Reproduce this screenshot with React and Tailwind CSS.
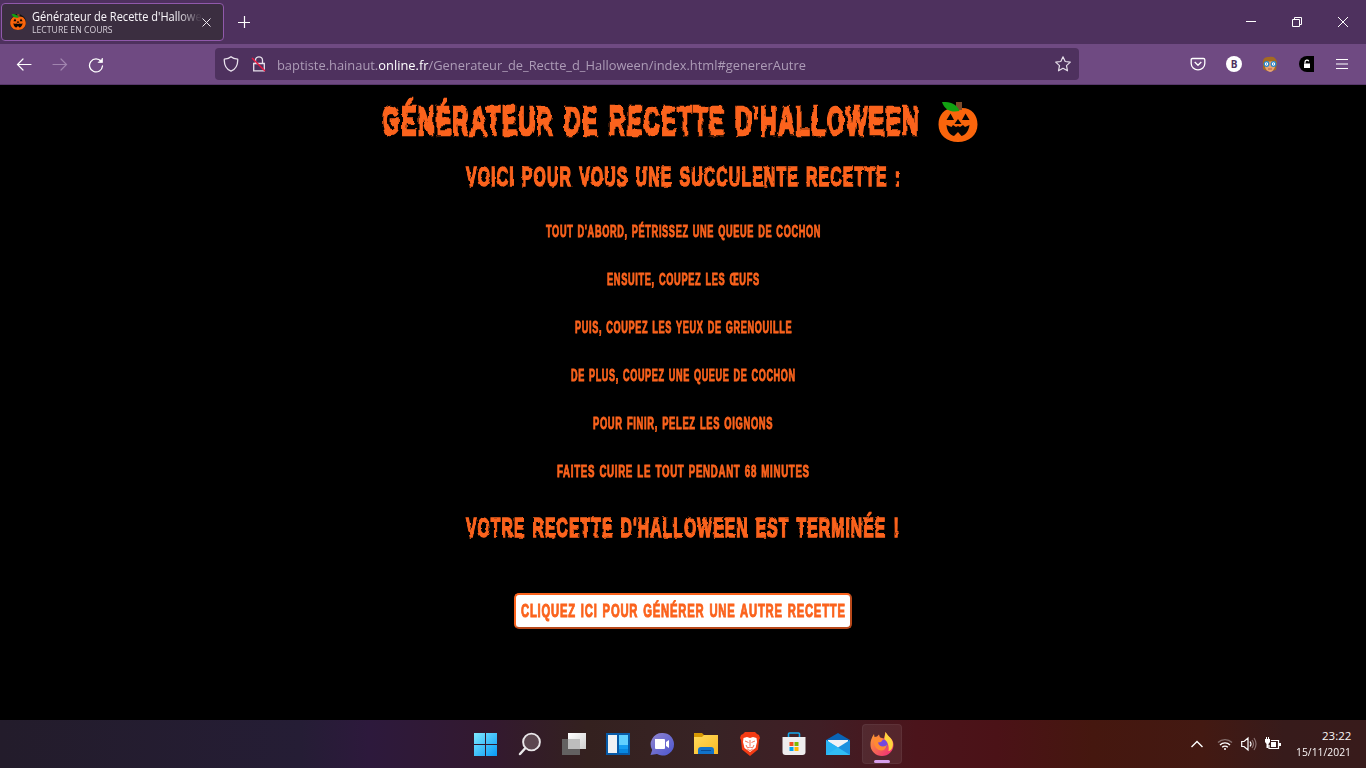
import React, { useLayoutEffect, useRef, useState } from 'react';

/* Text stretched horizontally so that it fills the width of its box. */
function Fit({ className = '', inner = '', children }) {
  const box = useRef(null);
  const text = useRef(null);
  const [scale, setScale] = useState(1);
  useLayoutEffect(() => {
    setScale(box.current.clientWidth / text.current.offsetWidth);
  }, []);
  return (
    <div ref={box} className={`whitespace-nowrap ${className}`}>
      <span ref={text} className={`inline-block origin-left ${inner}`} style={{ transform: `scaleX(${scale})` }}>
        {children}
      </span>
    </div>
  );
}

const spooky = "font-['Liberation_Sans_Narrow','Liberation_Sans',sans-serif] font-bold uppercase text-[#fb631d] tracking-[0.07em] [word-spacing:0.1em]";

const steps = [
  ["Tout d'abord, pétrissez une queue de cochon", 'w-[275px]'],
  ['Ensuite, coupez les œufs', 'w-[153px]'],
  ['Puis, coupez les yeux de grenouille', 'w-[217px]'],
  ['De plus, coupez une queue de cochon', 'w-[225px]'],
  ['Pour finir, pelez les oignons', 'w-[180px]'],
  ['Faites cuire le tout pendant 68 minutes', 'w-[253px]'],
];

function Pumpkin({ className, outline }) {
  return (
    <svg className={className} viewBox="0 0 40 40">
      {outline && <path d="M8 0h16l6 4c7 4 10 9 10 18 0 11-8 18-20 18S0 33 0 22C0 14 4 9 9 7z" fill="#111" />}
      <path d="M20 6.500C8 4 .5 12 .5 22.500S9 40 20 40s19.500-7 19.500-17.500S32 4 20 6.500z" fill="#fa650c" />
      <path d="M18 0h6v8h-6z" fill="#7d4a29" />
      <path d="M4 0c8-.5 15 2 17.500 9C14 10.500 7 9 4 0z" fill="#12a112" />
      <path d="M8.500 18l4-6.500 3.500 6.500zM24 18l3.500-6.500 4 6.500zM16.500 22l3.500-5 3.500 5zM8.500 23l5 2 1.500-2 3 2 2-1 2 1 3-2 2 2 4.500-2c-1 6.500-4 10-8 11l-3.500-4-4 4c-4-1-7-4.500-7.500-11z" fill="#050505" />
    </svg>
  );
}

function TabStrip() {
  return (
    <div className="flex h-11 items-center bg-[#4e315e]">
      <div className="ml-[1px] mb-[1px] flex h-[38px] w-[223px] items-center rounded-[4px] border border-[#9059ab] bg-[#3b2e40] pl-2">
        <Pumpkin className="h-4 w-4" outline />
        <div className="ml-[6px] w-[170px] overflow-hidden [mask-image:linear-gradient(to_right,black_145px,transparent_171px)]">
          <Fit className="mt-[1px] h-[15px] w-[170px] text-[12px] leading-[15px] text-[#fbf8fc]">Générateur de Recette d'Hallow<span className="text-white/60">e</span></Fit>
          <Fit className="h-[12px] w-[81px] text-[9px] leading-[12px] text-[#d6cfd9]">LECTURE EN COURS</Fit>
        </div>
        <svg className="mt-[2px] h-[9px] w-[9px]" viewBox="0 0 9 9" stroke="#eee9f1" strokeWidth="1"><path d="M.5.5l8 8M8.500.5l-8 8" /></svg>
      </div>
      <svg className="ml-[14px] h-3 w-3" viewBox="0 0 12 12" stroke="#fff" strokeWidth="1.200"><path d="M6.500 0v12M0 6.500h12" /></svg>
      <div className="ml-auto mr-[18px] flex items-center gap-9">
        <svg className="h-[10px] w-[10px]" viewBox="0 0 10 10" stroke="#fff"><path d="M0 4.500h10" /></svg>
        <svg className="h-[10px] w-[10px]" viewBox="0 0 10 10" fill="none" stroke="#fff"><path d="M.5 2.500h7v7h-7zM2.500 2.500v-2h7v7h-2" /></svg>
        <svg className="h-[10px] w-[10px]" viewBox="0 0 10 10" stroke="#fff"><path d="M0 0l10 10M10 0L0 10" /></svg>
      </div>
    </div>
  );
}

function Toolbar() {
  return (
    <div className="flex h-[41px] items-center border-b border-[#57386a] bg-[#6f4a82]">
      <svg className="ml-4 mt-[1px] h-4 w-4" viewBox="0 0 16 16" fill="none" stroke="#fff" strokeWidth="1.200" strokeLinecap="round"><path d="M7 2L1.500 7.500 7 13M1.500 7.500H15" /></svg>
      <svg className="ml-5 mt-[1px] h-4 w-4" viewBox="0 0 16 16" fill="none" stroke="#a185af" strokeWidth="1.200" strokeLinecap="round"><path d="M9 2l5.500 5.500L9 13M14.500 7.500H1" /></svg>
      <svg className="ml-5 mt-[1px] h-4 w-4" viewBox="0 0 16 16" fill="none" stroke="#fff" strokeWidth="1.300" strokeLinecap="round"><path d="M13.200 4.500A6.500 6.500 0 1 0 14.500 9" /><path d="M14.500 1.500v4h-4z" fill="#fff" strokeWidth=".7" /></svg>
      <div className="ml-[111px] flex h-8 w-[864px] items-center rounded-[4px] bg-[#4e315e] pl-2">
        <svg className="h-4 w-4" viewBox="0 0 16 16" fill="none" stroke="#e8e1ec" strokeWidth="1.300" strokeLinejoin="round"><path d="M8 .8C6.500 2.200 4 3 1.300 3.200c-.3 6 2 10 6.700 12 4.700-2 7-6 6.700-12C12 3 9.500 2.200 8 .8z" /></svg>
        <svg className="ml-3 h-4 w-4" viewBox="0 0 16 16" fill="none" stroke="#e8e1ec" strokeWidth="1.300"><path d="M4.500 7.500V4.300a3.500 3.500 0 0 1 7 0v3.200M2.700 7.500h10.600v7.300H2.700z" /><path d="M1 2l13 13" stroke="#ee173f" strokeWidth="1.500" /></svg>
        <Fit className="ml-[10px] mt-[1px] h-[18px] w-[529px] text-[13.500px] leading-[18px] text-[#ad9cb7]">
          baptiste.hainaut.<span className="text-white">online.fr</span>/Generateur_de_Rectte_d_Halloween/index.html#genererAutre
        </Fit>
        <svg className="ml-auto mr-2 h-4 w-4" viewBox="0 0 16 16" fill="none" stroke="#e6deea" strokeWidth="1.200" strokeLinejoin="round"><path d="M8 .8l2.200 4.700 5.100.6-3.800 3.500 1 5.200L8 12.300l-4.500 2.500 1-5.200L.7 6.100l5.100-.6z" /></svg>
      </div>
      <div className="ml-auto mr-[18px] flex items-center">
        <svg className="h-4 w-4" viewBox="0 0 16 16" fill="none" stroke="#fff" strokeWidth="1.300" strokeLinejoin="round"><path d="M2.500 2.500h11q1.300 0 1.300 1.300v3.700a6.800 6.300 0 0 1-13.600 0V3.800q0-1.300 1.300-1.300zM4.700 6L8 9.200 11.300 6" /></svg>
        <div className="ml-5 flex h-4 w-4 items-center justify-center rounded-full bg-white text-[10px] font-bold leading-4 text-[#4e315e]">B</div>
        <svg className="ml-5 h-4 w-4" viewBox="0 0 16 16"><path d="M1 9C0 2 3 1 7 1c5-1 7 1 8 5l-1 8-4 1H5l-4-2z" fill="#a46a22" /><path d="M3 6l10-1v6q-2 5-5 5-4-1-5-5z" fill="#e6a372" /><circle cx="4.500" cy="8" r="2.300" fill="#fff" stroke="#2587cd" strokeWidth="1.300" /><circle cx="11.500" cy="8" r="2.300" fill="#fff" stroke="#2587cd" strokeWidth="1.300" /><path d="M4 8h1M11 8h1" stroke="#075ba5" /><path d="M6 13h4" stroke="#b45d40" /></svg>
        <svg className="ml-[21px] h-4 w-[15px]" viewBox="0 0 15 16"><path d="M15 0v16H8A8 8 0 0 1 8 0z" fill="#000" /><path d="M5 7.500h6v4.500H5z" fill="#fff" /><path d="M6 7.500V6a2 2 0 0 1 3.800-.8" fill="none" stroke="#fff" strokeWidth="1.200" /></svg>
        <svg className="ml-[22px] h-4 w-3" viewBox="0 0 12 16" stroke="#fff" strokeWidth="1.200"><path d="M0 3.500h12M0 8h12M0 12.500h12" /></svg>
      </div>
    </div>
  );
}

function Page() {
  return (
    <main className="flex h-[635px] flex-col items-center bg-black">
      <h1 className="mt-[10px] flex h-[52px] items-center gap-[18px] pr-[7px]">
        <Fit className={`w-[538px] text-[41px] leading-[52px] [filter:url(#rough-lg)] [-webkit-text-stroke:2.600px_#fb631d] ${spooky}`}>Générateur de Recette d'Halloween</Fit>
        <Pumpkin className="mt-[1px] h-10 w-10" />
      </h1>
      <h2 className="mt-[14px]">
        <Fit className={`h-8 w-[435px] text-[27px] leading-8 [filter:url(#rough-md)] [-webkit-text-stroke:1.600px_#fb631d] ${spooky}`}>Voici pour vous une succulente recette :</Fit>
      </h2>
      <div className="mt-[27px] flex flex-col items-center gap-6">
        {steps.map(([label, width]) => (
          <Fit key={label} className={`h-6 text-[16px] leading-6 [filter:url(#rough-sm)] [-webkit-text-stroke:0.900px_#fb631d] ${spooky} ${width}`}>{label}</Fit>
        ))}
      </div>
      <h2 className="mt-[28px]">
        <Fit className={`h-8 w-[434px] text-[27px] leading-8 [filter:url(#rough-md)] [-webkit-text-stroke:1.600px_#fb631d] ${spooky}`}>Votre recette d'Halloween est terminée !</Fit>
      </h2>
      <button className="mt-[49px] flex h-9 w-[338px] items-center justify-center rounded-[5px] border-2 border-[#fb631d] border-b-[#b8481a] border-r-[#b8481a] bg-white">
        <Fit className={`h-6 w-[325px] text-left text-[18.500px] leading-6 [filter:url(#rough-sm)] [-webkit-text-stroke:1px_#fb631d] ${spooky}`}>Cliquez ici pour générer une autre recette</Fit>
      </button>
    </main>
  );
}

function AppIcons() {
  const s = 'h-6 w-6';
  return (
    <div className="flex items-center gap-5">
      <svg className={s} viewBox="0 0 24 24" fill="url(#win)"><path d="M1 1h11v11H1zM13 1h11v11H13zM1 13h11v11H1zM13 13h11v11H13z" /></svg>
      <svg className={s} viewBox="0 0 24 24"><path d="M8 16.500L3 22" stroke="#e9e7e9" strokeWidth="2.500" strokeLinecap="round" /><circle cx="14.500" cy="10" r="8.400" fill="#5c4750" stroke="#e9e7e9" strokeWidth="1.900" /></svg>
      <svg className={`${s} overflow-visible`} viewBox="0 0 24 24"><path d="M7 1h18v16H7z" fill="url(#pane)" /><path d="M1 7h18v16H1z" fill="#686868" opacity=".9" /><path d="M7 7h12v10H7z" fill="#bdbdbd" /></svg>
      <svg className={`${s} overflow-visible`} viewBox="-1 0 24 24"><path d="M0 1h24v22H0z" fill="#075ba8" /><path d="M2 3h9v18H2z" fill="#f0f2f4" /><path d="M13 3h9v10h-9z" fill="#61d0ff" /><path d="M13 13h9v8h-9z" fill="#159df1" /><path d="M13 17h9v4h-9z" fill="#0788e1" /></svg>
      <svg className={`${s} overflow-visible`} viewBox="-1 0 24 24"><path d="M12 1a11.300 11.300 0 1 1-5 21L.5 23l1.700-5A11.300 11.300 0 0 1 12 1z" fill="url(#chat)" /><path d="M5 7h9q1 0 1 1v8q0 1-1 1H6q-1 0-1-1zM16 10l3-2v8l-3-2z" fill="#fff" /></svg>
      <svg className={`${s} overflow-visible`} viewBox="-1 0 24 24"><path d="M0 1h8l3 3h-1L8 7H0z" fill="#d69803" /><path d="M0 5h8l2-2h14v19H0z" fill="url(#folder)" /><path d="M4 22v-4q0-3 3-3h10q3 0 3 3v4z" fill="#1173ca" /><path d="M7 18h10v1H7z" fill="#084c94" /></svg>
      <svg className={`${s} overflow-visible`} viewBox="-1 0 24 24"><path d="M7 0h10l2 2 2 1 1 3-1 2-1 9.500L12 24l-8-6.500L3 8 2 6l1-3 2-1z" fill="#f43b14" /><path d="M5.500 6L9 5l3 1 3-1 3.500 1 .5 4-1.500 6-5.500 4-5.500-4L5 10z" fill="#fff" /><path d="M7 9l3.500 1.500M17 9l-3.500 1.500M8 13l1.500 3 2.500-1 2.500 1L16 13M12 8v6M9.500 17.500l2.500 1 2.500-1" stroke="#f46142" strokeWidth=".9" fill="none" /></svg>
      <svg className={`${s} overflow-visible`} viewBox="-1 0 24 24"><path d="M6.500 6V2q0-1 1-1h9q1 0 1 1v4" fill="none" stroke="#12a8ec" strokeWidth="1.600" /><path d="M.5 5h23v15q0 3-3 3h-17q-3 0-3-3z" fill="#eeedee" /><path d="M7.500 10h4v4h-4z" fill="#f25022" /><path d="M12.500 10h4v4h-4z" fill="#7fba00" /><path d="M7.500 15h4v4h-4z" fill="#00a4ef" /><path d="M12.500 15h4v4h-4z" fill="#ffb900" /></svg>
      <svg className={`${s} overflow-visible`} viewBox="-1 0 24 24"><path d="M0 8l12-7 12 7v6H0z" fill="#0964b6" /><path d="M2 8h20v8H2z" fill="#f1f2f5" /><path d="M24 8v15H0z" fill="#1c91df" /><path d="M0 8l12 7.500L24 23H0z" fill="#31bdf5" /><path d="M24 8l-12 7.500L0 23V8l12 7.500z" fill="#29b4f4" /></svg>
    </div>
  );
}

function Firefox() {
  return (
    <div className="ml-[13px] flex h-10 w-10 flex-col items-center rounded-[4px] border border-white/5 bg-white/[0.07] pt-[7px]">
      <svg className="h-6 w-6" viewBox="0 0 24 24"><path d="M15.500 0c2 3 3 4 5 6 2 2 3 4 3 7A11.500 11 0 0 1 .5 13C.3 9 1.500 6 4 2l.5 3L7 4.500l2-2 1 3 4 1z" fill="url(#fox)" /><path d="M15.500 0c2 3 3 4 5 6 2.500 3 3 6 2 9-1 3-3 4-4 4 1-5-1-9-4-12z" fill="#ffd53d" /><circle cx="12.500" cy="12.500" r="5" fill="#7348df" /><path d="M4 5l6 .5 3 2-2 2.500-3 .5q1 4 5 4 3 0 4-2-1 6-6 6-6-1-7-7z" fill="#ff8a32" /></svg>
      <div className="mt-[4px] h-[3px] w-4 shrink-0 rounded-full bg-[#d79eea]" />
    </div>
  );
}

function Taskbar() {
  return (
    <footer className="flex h-12 items-center bg-[linear-gradient(90deg,#231c2b_0%,#251d35_22%,#2d193c_27%,#33192f_36%,#34211f_43%,#382325_52%,#401e25_60%,#4b141b_67%,#4b1217_73%,#45170f_80%,#431912_88%,#371b1b_94%,#381b1b_100%)]">
      <div className="ml-[473px]"><AppIcons /></div>
      <Firefox />
      <svg className="ml-auto h-2 w-3" viewBox="0 0 12 8" fill="none" stroke="#fff" strokeWidth="1.400"><path d="M.5 7L6 1.500 11.500 7" /></svg>
      <svg className="ml-[14px] h-4 w-4" viewBox="0 0 16 16" fill="none" stroke="#fff" strokeWidth="1.400"><path d="M1 6.500a10 10 0 0 1 14 0" stroke="#87716f" /><path d="M3 9a7 7 0 0 1 10 0M5.200 11.300a4 4 0 0 1 5.600 0" /><circle cx="8" cy="13" r="1" fill="#fff" stroke="none" /></svg>
      <svg className="ml-2 h-4 w-4" viewBox="0 0 16 16" fill="none" stroke="#fff" strokeWidth="1.200"><path d="M.7 5.500H3L7 2v12l-4-3.500H.7zM9 5.500q2 2.500 0 5" /><path d="M11 4q3 4 0 8M13 2q4 6 0 12" stroke="#8b7271" /></svg>
      <svg className="ml-2 h-4 w-4" viewBox="0 0 16 16"><path d="M6 4.500h7.500v8H4V9" fill="none" stroke="#fff" strokeWidth="1.200" /><path d="M6 6h5v5H6zM14 7h2v3h-2zM0 3h5v3L3.500 8v4h-2V8L0 6zM1 1h1v3H1zM3 1h1v3H3z" fill="#fff" /></svg>
      <div className="ml-[15px] mr-[15px] flex w-[55px] flex-col items-end text-[#fbf7f7]">
        <Fit className="h-4 w-[29px] text-[11.500px] leading-4">23:22</Fit>
        <Fit className="h-4 w-[55px] text-[11.500px] leading-4">15/11/2021</Fit>
      </div>
    </footer>
  );
}

function Gradient({ id, a, b }) {
  return <linearGradient id={id} x1="0" y1="0" x2="1" y2="1"><stop stopColor={a} /><stop offset="1" stopColor={b} /></linearGradient>;
}

function Rough({ id, freq, scale }) {
  return (
    <filter id={id} x="-2%" y="-20%" width="104%" height="140%" colorInterpolationFilters="sRGB">
      <feTurbulence type="fractalNoise" baseFrequency={freq} numOctaves="1" seed="4" result="n" />
      <feDisplacementMap in="SourceGraphic" in2="n" scale={scale} xChannelSelector="R" yChannelSelector="G" />
    </filter>
  );
}

export default function App() {
  return (
    <div className="h-[768px] w-[1366px] overflow-hidden bg-black font-['Open_Sans','Noto_Sans',sans-serif]">
      <TabStrip />
      <Toolbar />
      <Page />
      <Taskbar />
      <svg className="absolute h-0 w-0">
        <defs>
          <Rough id="rough-lg" freq="0.14" scale="6" />
          <Rough id="rough-md" freq="0.2" scale="3" />
          <Rough id="rough-sm" freq="0.3" scale="1.500" />
          <Gradient id="win" a="#7eeaff" b="#0799f7" />
          <Gradient id="pane" a="#fff" b="#cfcfcf" />
          <Gradient id="chat" a="#9085cf" b="#4b55cf" />
          <Gradient id="folder" a="#ffdb5b" b="#f8b925" />
          <Gradient id="fox" a="#ffa52c" b="#ed247d" />
        </defs>
      </svg>
    </div>
  );
}
